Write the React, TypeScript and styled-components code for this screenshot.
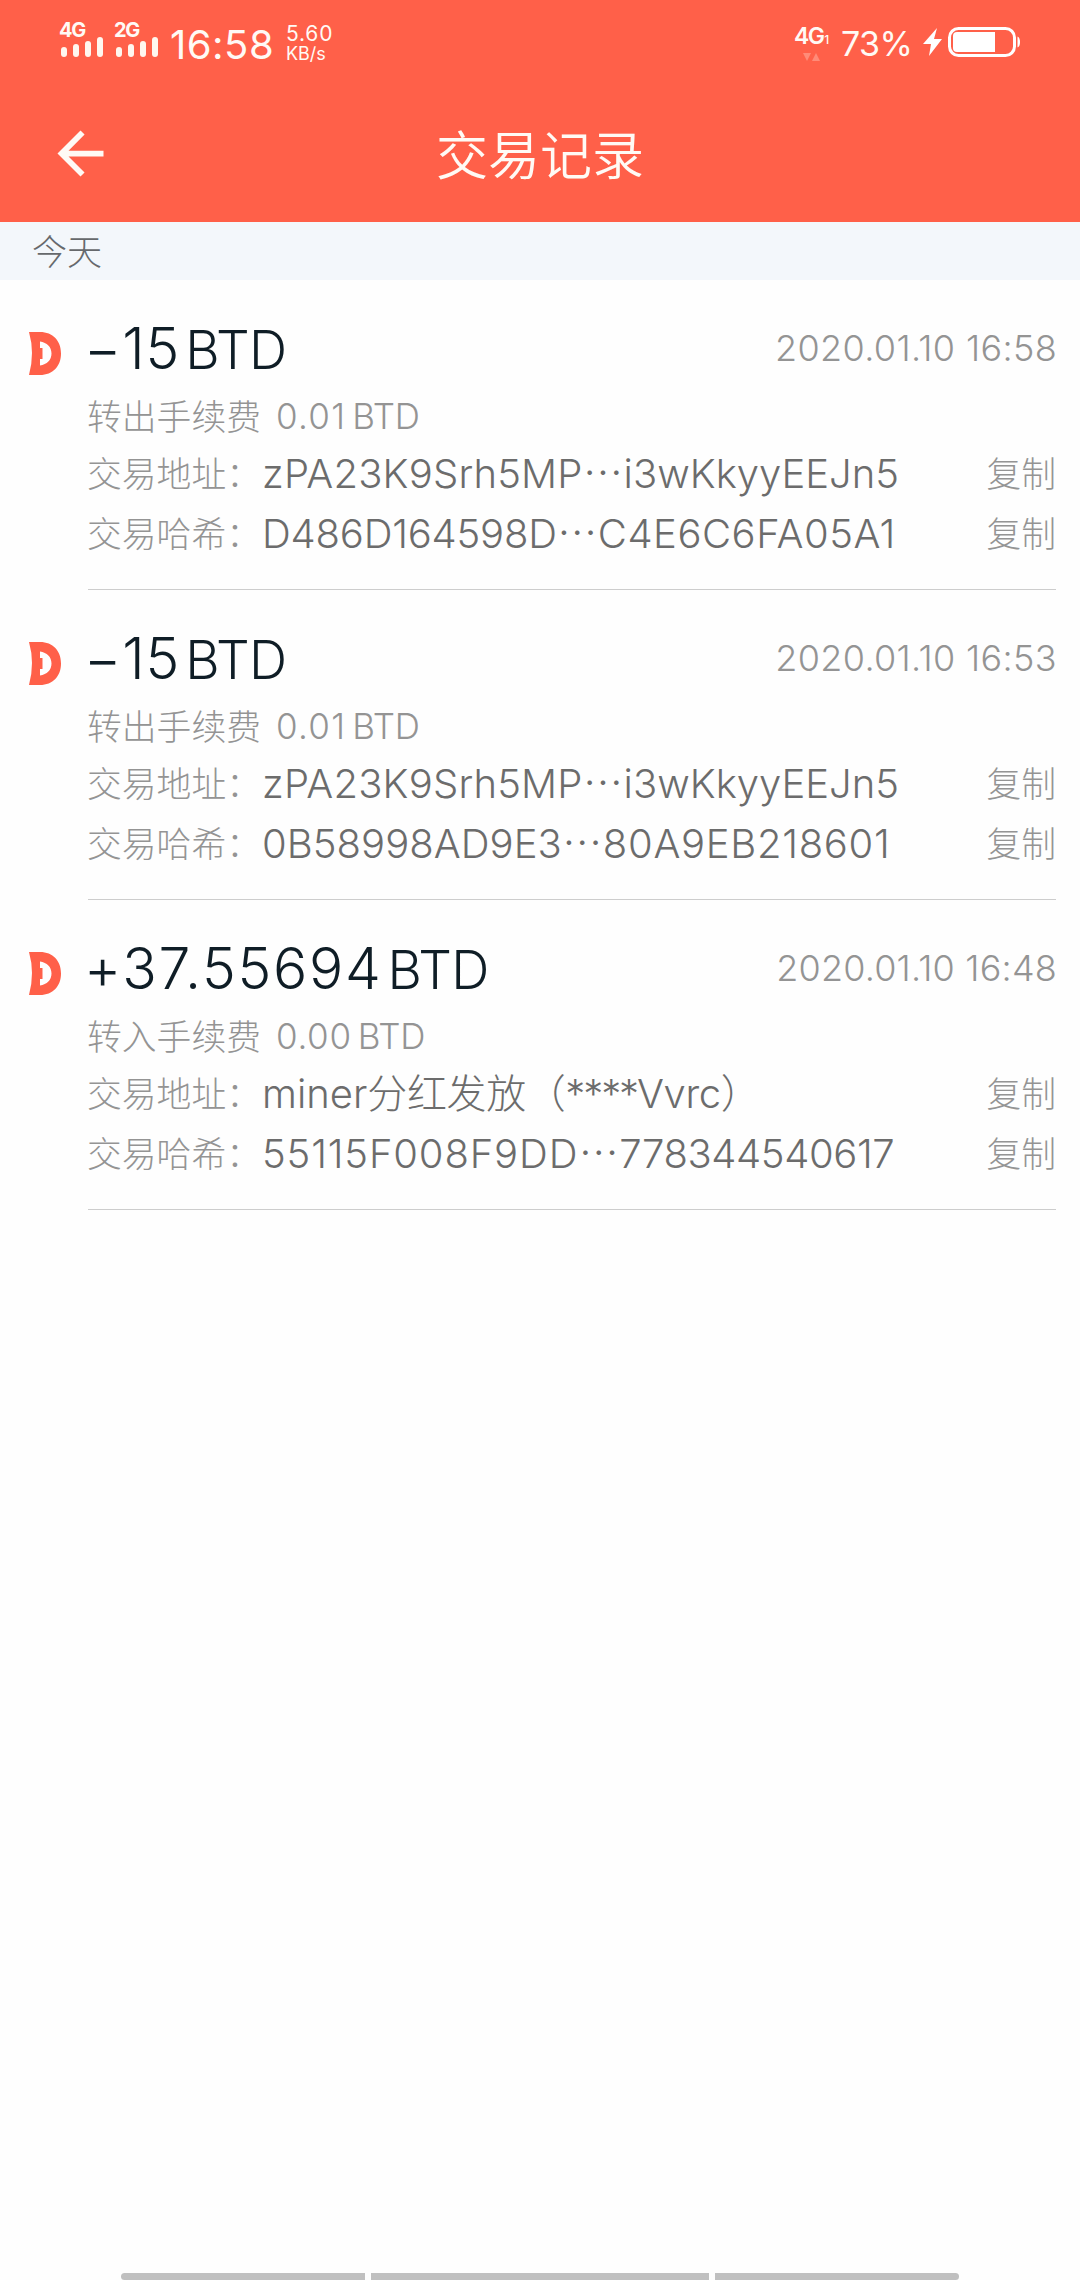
import React from "react";
import styled, { createGlobalStyle } from "styled-components";

const GlobalStyle = createGlobalStyle`
  * { box-sizing: border-box; }
  html, body { margin: 0; padding: 0; background: #fefefe; }
  body {
    font-family: Inter, "Noto Sans CJK SC", sans-serif;
    font-weight: 300;
    -webkit-font-smoothing: antialiased;
  }
`;

const Screen = styled.div`
  display: flex;
  flex-direction: column;
  width: 1080px;
  height: 2280px;
  background: #fefefe;
  overflow: hidden;
  white-space: nowrap;
`;

const TopArea = styled.div`
  display: flex;
  flex-direction: column;
  height: 222px;
  background: #ff6049;
  color: #fffaf5;
`;

const StatusBar = styled.div`
  display: flex;
  justify-content: space-between;
  height: 88px;
  padding: 0 59px 0 60px;
`;

const StatusGroup = styled.div`
  display: flex;
  align-items: flex-start;
`;

const Signal = styled.div`
  display: flex;
  flex-direction: column;
  width: 55px;
  padding-top: 21px;
`;

const SignalLabel = styled.span`
  height: 16px;
  margin-left: -1px;
  font-size: 20px;
  line-height: 18px;
  font-weight: 700;
  letter-spacing: -1.4px;
`;

const Bars = styled.div`
  display: flex;
  align-items: flex-end;
  gap: 6px;
  height: 20px;
  padding-left: 1px;
`;

const Bar = styled.i<{ $h: number }>`
  width: 6px;
  height: ${(p) => p.$h}px;
  border-radius: 3px;
  background: #fff7ef;
`;

const Clock = styled.span`
  width: 116px;
  padding-top: 21px;
  font-size: 40px;
  line-height: 48px;
  font-weight: 400;
  letter-spacing: 0.5px;
`;

const NetSpeed = styled.div`
  display: flex;
  flex-direction: column;
  padding-top: 22px;
`;

const SpeedValue = styled.span`
  font-size: 21px;
  line-height: 24px;
  font-weight: 400;
  letter-spacing: 0.8px;
`;

const SpeedUnit = styled.span`
  font-size: 18px;
  line-height: 16px;
  font-weight: 400;
`;

const DataType = styled.div`
  display: flex;
  flex-direction: column;
  width: 47px;
  padding-top: 26px;
  font-size: 23px;
  line-height: 21px;
  font-weight: 600;
  letter-spacing: -1.6px;
`;

const SimIndex = styled.small`
  margin-left: 1px;
  font-size: 12px;
  font-weight: 500;
`;

const Percent = styled.span`
  width: 82px;
  padding-top: 24px;
  font-size: 34px;
  line-height: 40px;
  font-weight: 400;
  letter-spacing: -0.6px;
`;

const NavBar = styled.div`
  display: grid;
  grid-template-columns: 69px 1fr 69px;
  align-items: center;
  height: 134px;
  padding: 0 46px 4px;
`;

const Title = styled.h1`
  margin: 0;
  padding-top: 8px;
  text-align: center;
  font-size: 52px;
  line-height: 60px;
  font-weight: 350;
`;

const DayHeader = styled.div`
  display: flex;
  align-items: center;
  height: 58px;
  padding: 2px 32px 0;
  background: #f3f7fb;
  color: #66696c;
  font-size: 35px;
  line-height: 56px;
`;

const List = styled.div`
  display: flex;
  flex-direction: column;
  flex: 1;
`;

const Item = styled.article`
  display: grid;
  grid-template-columns: 60px 1fr;
  height: 310px;
  padding: 0 24px 0 28px;
`;

const IconCell = styled.div`
  padding-top: 52px;
`;

const Details = styled.div`
  display: flex;
  flex-direction: column;
  height: 310px;
  padding-top: 31px;
  border-bottom: 1px solid #cdcdcd;
`;

const Head = styled.div`
  display: flex;
  justify-content: space-between;
  align-items: center;
  height: 74px;
`;

const Amount = styled.div<{ $spacing: number }>`
  display: flex;
  align-items: baseline;
  margin-left: -4px;
  padding-top: 2px;
  color: #0f1d26;
  font-size: 57px;
  line-height: 74px;
  letter-spacing: ${(p) => p.$spacing}px;
`;

const AmountUnit = styled.span`
  margin-left: 5px;
  font-size: 53px;
  letter-spacing: -0.7px;
`;

const DateTime = styled.time<{ $spacing: number }>`
  margin-right: -1px;
  padding-bottom: 1px;
  color: #949494;
  font-size: 36px;
  line-height: 40px;
  letter-spacing: ${(p) => p.$spacing}px;
`;

const Fee = styled.div`
  display: flex;
  align-items: center;
  height: 58px;
  padding-top: 4px;
  color: #949494;
  font-size: 35px;
`;

const FeeLabel = styled.span`
  width: 189px;
  margin-left: -1px;
  padding-bottom: 2px;
  font-size: 34.8px;
`;

const FeeValue = styled.span<{ $spacing: number }>`
  letter-spacing: ${(p) => p.$spacing}px;
`;

const FeeUnit = styled.span`
  margin-left: 6px;
  letter-spacing: -0.3px;
`;

const Field = styled.div`
  display: grid;
  grid-template-columns: 174px 1fr auto;
  align-items: center;
  height: 60px;
  color: #949494;
  font-size: 34.8px;
`;

const FieldLabel = styled.span`
  margin-left: -1px;
  padding-bottom: 3px;
`;

const FieldValue = styled.span`
  display: flex;
  align-items: baseline;
  padding-top: 2px;
  color: #6c6c6c;
  font-size: 40px;
  line-height: 58px;
`;

const Run = styled.span<{ $spacing: number }>`
  letter-spacing: ${(p) => p.$spacing}px;
`;

const Dots = styled.span`
  width: 41px;
  font-family: "Noto Sans CJK SC", sans-serif;
  line-height: 1;
  text-align: center;
`;

const CopyButton = styled.button`
  padding: 0 0 3px;
  border: 0;
  background: none;
  color: #949494;
  font: inherit;
`;

const GestureBar = styled.div`
  display: grid;
  grid-template-columns: 244px 338px 244px;
  gap: 6px;
  height: 7px;
  padding-left: 121px;
`;

const GestureSegment = styled.i<{ $radius: string }>`
  background: #c0c0c0;
  border-radius: ${(p) => p.$radius};
`;

const ArrowsIcon = styled.svg`
  margin: 3px 0 0 9px;
`;

const BoltIcon = styled.svg`
  margin: 28px 5px 0 0;
`;

const BatteryIcon = styled.svg`
  margin-top: 27px;
`;

const SignalMeter = ({ label }: { label: string }) => (
  <Signal>
    <SignalLabel>{label}</SignalLabel>
    <Bars>
      {[10, 13, 16, 20].map((h) => (
        <Bar key={h} $h={h} />
      ))}
    </Bars>
  </Signal>
);

const DataArrows = () => (
  <ArrowsIcon width="17" height="9" viewBox="0 0 17 9">
    <path d="M0 0h8L4 8zM9 8h8L13 0z" fill="#ff8b78" />
  </ArrowsIcon>
);

const Bolt = () => (
  <BoltIcon width="20" height="28" viewBox="0 0 20 28">
    <path d="M14 0 0 16h8L6 28 19 11h-8z" fill="#fff" />
  </BoltIcon>
);

const Battery = () => (
  <BatteryIcon width="73" height="30" viewBox="0 0 73 30">
    <rect x="1.5" y="1.5" width="65" height="27" rx="9" fill="none" stroke="#fff" strokeWidth="3" />
    <path d="M9 5h38v20H9a4 4 0 0 1-4-4V9a4 4 0 0 1 4-4z" fill="#fff" />
    <path d="M69.500 9.500q2.500 1 2.500 5.500t-2.500 5.500z" fill="#fff" />
  </BatteryIcon>
);

const BackArrow = () => (
  <svg width="69" height="69" viewBox="0 0 24 24">
    <path d="M20 11H7.830l5.590-5.590L12 4l-8 8 8 8 1.410-1.410L7.830 13H20z" fill="#fffaf5" />
  </svg>
);

const CoinLogo = () => (
  <svg width="34" height="43" viewBox="0 0 34 43">
    <path
      fillRule="evenodd"
      d="M1 0H12C25 0 33 9 33 21.500S25 43 12 43H1Q7 21 1 0ZM12 9.500V16H14.500V27H12V33.500C19 32.500 23.500 28 23.500 21.500S19 10.500 12 9.500Z"
      fill="#ff6049"
    />
  </svg>
);

type TextRun = [text: string, spacing: number];

interface Transaction {
  amount: TextRun;
  date: TextRun;
  feeLabel: string;
  fee: TextRun;
  address: TextRun[];
  hash: TextRun[];
}

const ELLIPSIS = "⋯";

const ADDRESS: TextRun[] = [
  ["zPA23K9Srh5MP", 0.2],
  [ELLIPSIS, 0],
  ["i3wKkyyEEJn5", 0],
];

const TRANSACTIONS: Transaction[] = [
  {
    amount: ["−15", 0.9],
    date: ["2020.01.10 16:58", 0.35],
    feeLabel: "转出手续费",
    fee: ["0.01", 1.3],
    address: ADDRESS,
    hash: [["D486D164598D", -0.2], [ELLIPSIS, 0], ["C4E6C6FA05A1", 0.5]],
  },
  {
    amount: ["−15", 0.9],
    date: ["2020.01.10 16:53", 0.35],
    feeLabel: "转出手续费",
    fee: ["0.01", 1.3],
    address: ADDRESS,
    hash: [["0B58998AD9E3", 0.05], [ELLIPSIS, 0], ["80A9EB218601", 0.7]],
  },
  {
    amount: ["+37.55694", 1.7],
    date: ["2020.01.10 16:48", 0.2],
    feeLabel: "转入手续费",
    fee: ["0.00", 0.7],
    address: [["miner", 0], ["分红发放（", -0.4], ["****", -2.1], ["Vvrc", -0.4], ["）", 0]],
    hash: [["55115F008F9DD", 0.85], [ELLIPSIS, 0], ["778344540617", -0.4]],
  },
];

const FieldRow = ({ label, runs }: { label: string; runs: TextRun[] }) => (
  <Field>
    <FieldLabel>{label}</FieldLabel>
    <FieldValue>
      {runs.map(([text, spacing]) =>
        text === ELLIPSIS ? (
          <Dots key={text}>{text}</Dots>
        ) : (
          <Run key={text} $spacing={spacing}>
            {text}
          </Run>
        )
      )}
    </FieldValue>
    <CopyButton>复制</CopyButton>
  </Field>
);

export default function App() {
  return (
    <Screen>
      <GlobalStyle />
      <TopArea>
        <StatusBar>
          <StatusGroup>
            <SignalMeter label="4G" />
            <SignalMeter label="2G" />
            <Clock>16:58</Clock>
            <NetSpeed>
              <SpeedValue>5.60</SpeedValue>
              <SpeedUnit>KB/s</SpeedUnit>
            </NetSpeed>
          </StatusGroup>
          <StatusGroup>
            <DataType>
              <span>
                4G<SimIndex>1</SimIndex>
              </span>
              <DataArrows />
            </DataType>
            <Percent>73%</Percent>
            <Bolt />
            <Battery />
          </StatusGroup>
        </StatusBar>
        <NavBar>
          <BackArrow />
          <Title>交易记录</Title>
        </NavBar>
      </TopArea>
      <DayHeader>今天</DayHeader>
      <List>
        {TRANSACTIONS.map((t) => (
          <Item key={t.date[0]}>
            <IconCell>
              <CoinLogo />
            </IconCell>
            <Details>
              <Head>
                <Amount $spacing={t.amount[1]}>
                  {t.amount[0]}
                  <AmountUnit>BTD</AmountUnit>
                </Amount>
                <DateTime $spacing={t.date[1]}>{t.date[0]}</DateTime>
              </Head>
              <Fee>
                <FeeLabel>{t.feeLabel}</FeeLabel>
                <FeeValue $spacing={t.fee[1]}>{t.fee[0]}</FeeValue>
                <FeeUnit>BTD</FeeUnit>
              </Fee>
              <FieldRow label="交易地址：" runs={t.address} />
              <FieldRow label="交易哈希：" runs={t.hash} />
            </Details>
          </Item>
        ))}
      </List>
      <GestureBar>
        <GestureSegment $radius="4px 0 0 4px" />
        <GestureSegment $radius="0" />
        <GestureSegment $radius="0 4px 4px 0" />
      </GestureBar>
    </Screen>
  );
}
